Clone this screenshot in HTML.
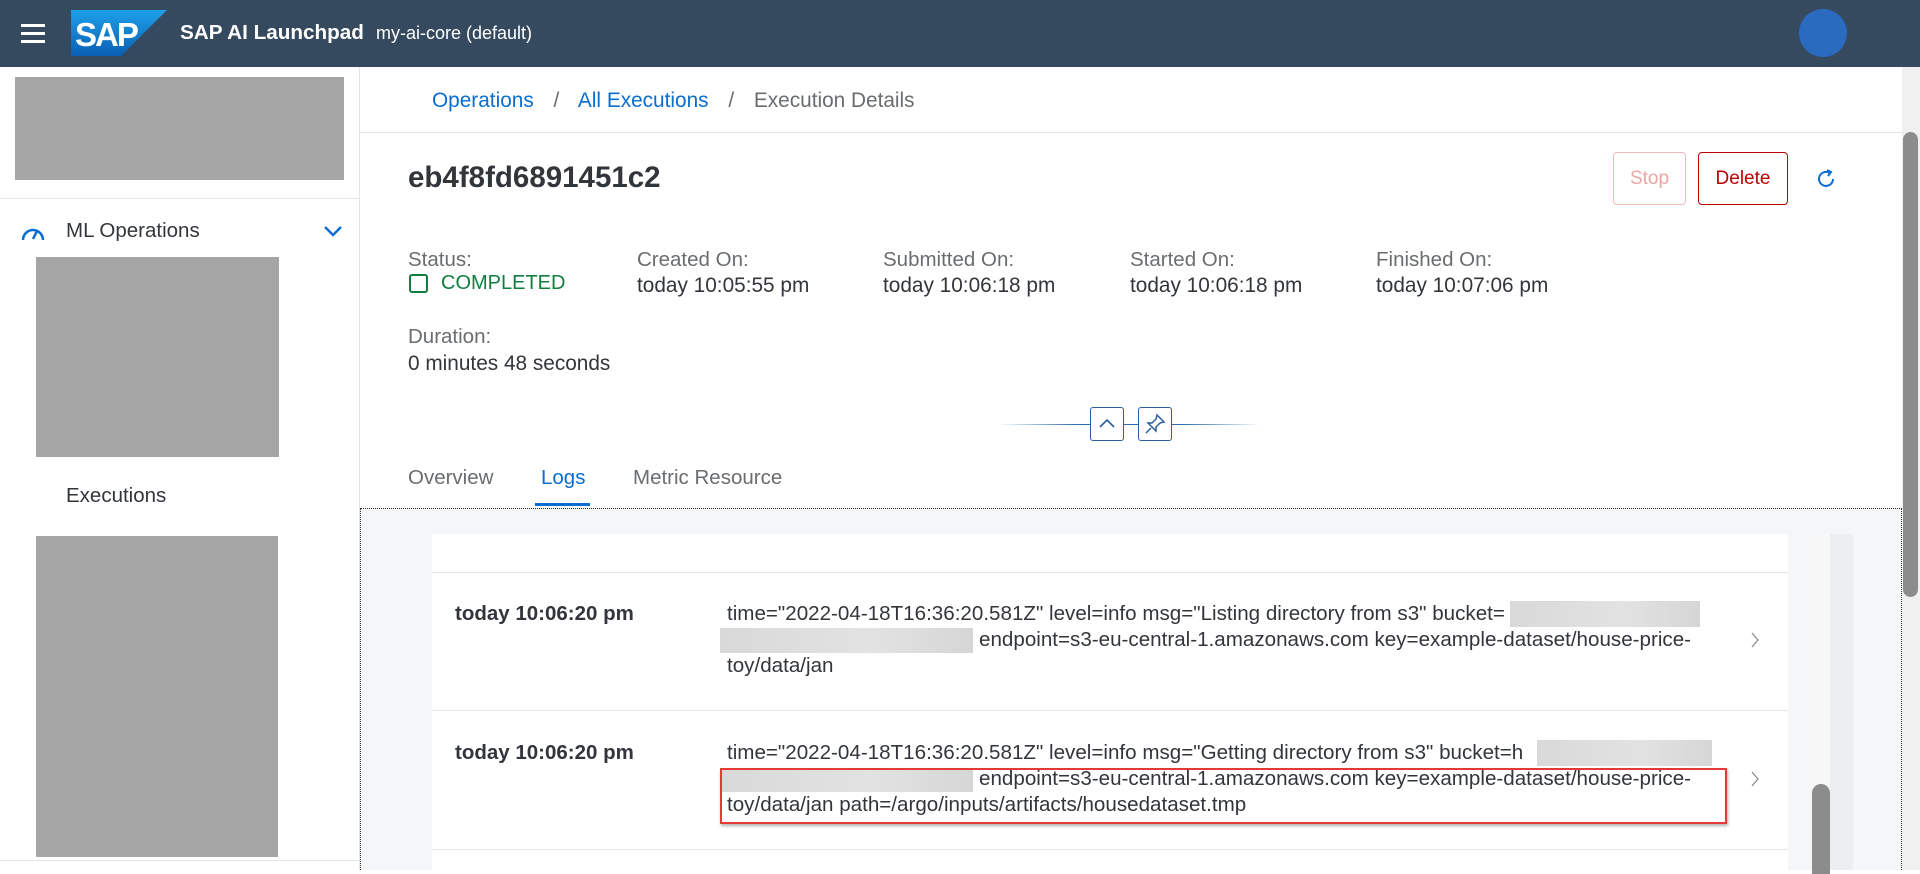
<!DOCTYPE html>
<html><head><meta charset="utf-8"><style>
*{margin:0;padding:0;box-sizing:border-box}
body{width:1920px;height:870px;overflow:hidden;background:#fff;font-family:"Liberation Sans",sans-serif;color:#32363a;position:relative}
.a{position:absolute;white-space:nowrap}
.hdr{left:0;top:0;width:1920px;height:67px;background:#354a5f}
.g{background:#a5a5a5}
.lbl{font-size:20.5px;color:#6a6d70}
.val{font-size:20.8px;color:#32363a}
.msg{font-size:20.6px;color:#32363a;line-height:26px}
.red{background:linear-gradient(90deg,#d9d9d9,#e2e2e2 60%,#d6d6d6)}
</style></head><body>
<div class="a hdr"></div>
<div class="a" style="left:21px;top:24px;width:24px;height:3px;background:#fff"></div>
<div class="a" style="left:21px;top:32px;width:24px;height:3px;background:#fff"></div>
<div class="a" style="left:21px;top:40px;width:24px;height:3px;background:#fff"></div>
<svg class="a" style="left:71px;top:10px" width="96" height="46" viewBox="0 0 96 46"><defs><linearGradient id="sg" x1="0" y1="0" x2="0" y2="1"><stop offset="0" stop-color="#1ea0e8"/><stop offset="1" stop-color="#0a5fb4"/></linearGradient></defs><polygon points="0,0 96,0 50,46 0,46" fill="url(#sg)"/><text x="4" y="36" font-family="Liberation Sans" font-weight="bold" font-size="33" fill="#fff" letter-spacing="-2">SAP</text></svg>
<div class="a" style="left:180px;top:21px;font-size:20.7px;font-weight:bold;color:#fff">SAP AI Launchpad</div>
<div class="a" style="left:376px;top:23px;font-size:18px;color:#fff">my-ai-core (default)</div>
<div class="a" style="left:1799px;top:9px;width:48px;height:48px;border-radius:50%;background:#2a6bbf"></div>

<div class="a" style="left:359px;top:67px;width:1px;height:803px;background:#e5e5e5"></div>
<div class="a g" style="left:15px;top:77px;width:329px;height:103px"></div>
<div class="a" style="left:0;top:198px;width:359px;height:1px;background:#e5e5e5"></div>
<svg class="a" style="left:20px;top:222px" width="26" height="20" viewBox="0 0 26 20"><path d="M3 18 A10 10 0 1 1 23 18" fill="none" stroke="#0a6ed1" stroke-width="2.5"/><path d="M13 17 L17 9" stroke="#0a6ed1" stroke-width="2.5"/></svg>
<div class="a" style="left:66px;top:219px;font-size:20.5px">ML Operations</div>
<svg class="a" style="left:323px;top:224px" width="20" height="14"><path d="M2 3 L10 11 L18 3" fill="none" stroke="#0a6ed1" stroke-width="2.5"/></svg>
<div class="a g" style="left:36px;top:257px;width:243px;height:200px"></div>
<div class="a" style="left:66px;top:484px;font-size:20.5px">Executions</div>
<div class="a g" style="left:36px;top:536px;width:242px;height:321px"></div>
<div class="a" style="left:0;top:860px;width:359px;height:1px;background:#e5e5e5"></div>

<div class="a" style="left:432px;top:89px;font-size:20.8px;color:#0a6ed1">Operations <span style="color:#6a6d70;margin:0 14px">/</span> All Executions <span style="color:#6a6d70;margin:0 14px">/</span> <span style="color:#6a6d70">Execution Details</span></div>
<div class="a" style="left:360px;top:132px;width:1542px;height:1px;background:#e5e5e5"></div>
<div class="a" style="left:408px;top:161px;font-size:29.5px;font-weight:bold">eb4f8fd6891451c2</div>
<div class="a" style="left:1613px;top:152px;width:73px;height:53px;border:1px solid #f0b8b8;border-radius:4px;color:#eba6a6;font-size:19px;text-align:center;line-height:51px">Stop</div>
<div class="a" style="left:1698px;top:152px;width:90px;height:53px;border:1px solid #bb0000;border-radius:4px;color:#bb0000;font-size:19px;text-align:center;line-height:51px">Delete</div>
<svg class="a" style="left:1814px;top:167px" width="24" height="24" viewBox="0 0 24 24"><path d="M19 12 A7 7 0 1 1 15 5.6" fill="none" stroke="#0a6ed1" stroke-width="2"/><path d="M13 3 L17 5 L14 9" fill="none" stroke="#0a6ed1" stroke-width="2"/></svg>

<div class="a lbl" style="left:408px;top:248px">Status:</div>
<div class="a" style="left:409px;top:274px;width:19px;height:19px;border:2.5px solid #107e3e;border-radius:3px"></div>
<div class="a" style="left:441px;top:272px;font-size:20px;color:#107e3e">COMPLETED</div>
<div class="a lbl" style="left:637px;top:248px">Created On:</div><div class="a val" style="left:637px;top:274px">today 10:05:55 pm</div>
<div class="a lbl" style="left:883px;top:248px">Submitted On:</div><div class="a val" style="left:883px;top:274px">today 10:06:18 pm</div>
<div class="a lbl" style="left:1130px;top:248px">Started On:</div><div class="a val" style="left:1130px;top:274px">today 10:06:18 pm</div>
<div class="a lbl" style="left:1376px;top:248px">Finished On:</div><div class="a val" style="left:1376px;top:274px">today 10:07:06 pm</div>
<div class="a lbl" style="left:408px;top:325px">Duration:</div>
<div class="a val" style="left:408px;top:352px">0 minutes 48 seconds</div>

<div class="a" style="left:998px;top:424px;width:263px;height:1px;background:linear-gradient(90deg,rgba(10,110,209,0),#2b6cb0 30%,#2b6cb0 70%,rgba(10,110,209,0))"></div>
<div class="a" style="left:1090px;top:407px;width:34px;height:34px;border:1px solid #2b5e9a;border-radius:3px;background:#fff"></div>
<svg class="a" style="left:1097px;top:416px" width="20" height="14"><path d="M3 11 L10 4 L17 11" fill="none" stroke="#2b5e9a" stroke-width="1.6"/></svg>
<div class="a" style="left:1138px;top:407px;width:34px;height:34px;border:1px solid #2b5e9a;border-radius:3px;background:#fff"></div>
<svg class="a" style="left:1143px;top:412px" width="24" height="24" viewBox="0 0 24 24"><path d="M14 3 L21 10 L17 11 L13 15 L13 19 L5 11 L9 11 L13 7 Z M8 16 L3 21" fill="none" stroke="#2b5e9a" stroke-width="1.5"/></svg>

<div class="a" style="left:408px;top:466px;font-size:20.5px;color:#6a6d70">Overview</div>
<div class="a" style="left:541px;top:466px;font-size:20.5px;color:#0a6ed1">Logs</div>
<div class="a" style="left:535px;top:503px;width:55px;height:3px;background:#0a6ed1"></div>
<div class="a" style="left:633px;top:466px;font-size:20.5px;color:#6a6d70">Metric Resource</div>

<div class="a" style="left:360px;top:508px;width:1542px;height:362px;background:#f5f6f7;border-top:1px dotted #333;border-left:1px dotted #333;border-right:1px dotted #333"></div>
<div class="a" style="left:432px;top:534px;width:1356px;height:336px;background:#fff"></div>
<div class="a" style="left:432px;top:572px;width:1356px;height:1px;background:#e5e5e5"></div>
<div class="a" style="left:432px;top:710px;width:1356px;height:1px;background:#e5e5e5"></div>
<div class="a" style="left:432px;top:849px;width:1356px;height:1px;background:#e5e5e5"></div>

<div class="a" style="left:455px;top:602px;font-size:20.5px;font-weight:bold">today 10:06:20 pm</div>
<div class="a red" style="left:1510px;top:601px;width:190px;height:26px"></div>
<div class="a red" style="left:720px;top:628px;width:253px;height:25px"></div>
<div class="a msg" style="left:727px;top:601px">time="2022-04-18T16:36:20.581Z" level=info msg="Listing directory from s3" bucket=</div>
<div class="a msg" style="left:979px;top:627px">endpoint=s3-eu-central-1.amazonaws.com key=example-dataset/house-price-</div>
<div class="a msg" style="left:727px;top:653px">toy/data/jan</div>
<svg class="a" style="left:1749px;top:631px" width="12" height="18"><path d="M3 2 L9 9 L3 16" fill="none" stroke="#8a8b8c" stroke-width="1.3"/></svg>

<div class="a" style="left:455px;top:741px;font-size:20.5px;font-weight:bold">today 10:06:20 pm</div>
<div class="a red" style="left:1537px;top:740px;width:175px;height:26px"></div>
<div class="a red" style="left:720px;top:768px;width:253px;height:24px"></div>
<div class="a msg" style="left:727px;top:740px">time="2022-04-18T16:36:20.581Z" level=info msg="Getting directory from s3" bucket=h</div>
<div class="a msg" style="left:979px;top:766px">endpoint=s3-eu-central-1.amazonaws.com key=example-dataset/house-price-</div>
<div class="a msg" style="left:727px;top:792px">toy/data/jan path=/argo/inputs/artifacts/housedataset.tmp</div>
<svg class="a" style="left:1749px;top:770px" width="12" height="18"><path d="M3 2 L9 9 L3 16" fill="none" stroke="#8a8b8c" stroke-width="1.3"/></svg>
<div class="a" style="left:720px;top:768px;width:1007px;height:56px;border:2px solid #e53935;box-shadow:1px 2px 3px rgba(0,0,0,.3)"></div>

<div class="a" style="left:1812px;top:534px;width:41px;height:336px;background:#eceef0"></div>
<div class="a" style="left:1812px;top:534px;width:18px;height:336px;background:#f7f7f7"></div>
<div class="a" style="left:1812px;top:784px;width:18px;height:90px;background:#8c8c8c;border-radius:9px 9px 0 0"></div>

<div class="a" style="left:1902px;top:67px;width:18px;height:803px;background:#f0f0f0"></div>
<div class="a" style="left:1903px;top:132px;width:15px;height:465px;background:#8c8c8c;border-radius:8px"></div>
</body></html>
